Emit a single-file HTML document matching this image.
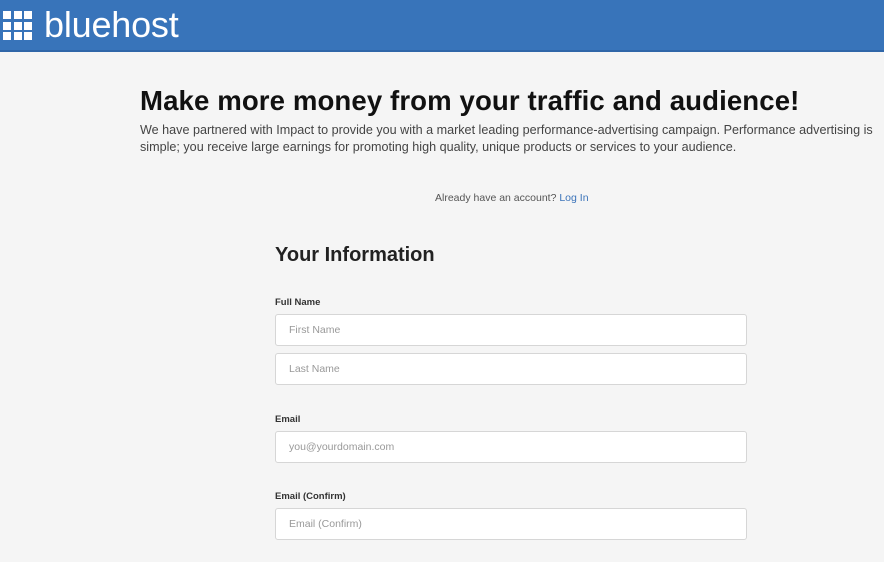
<!DOCTYPE html>
<html><head><meta charset="utf-8"><style>
*{margin:0;padding:0;box-sizing:border-box}
body{width:884px;height:562px;overflow:hidden;background:#f5f5f5;font-family:"Liberation Sans",sans-serif;position:relative}
.hdr{position:absolute;left:0;top:0;width:884px;height:52px;background:#3874ba;border-bottom:2px solid #2f66a8}
.grid{position:absolute;left:3px;top:11px;width:29px;height:29px;display:grid;grid-template-columns:repeat(3,8px);grid-gap:2.5px}
.grid i{background:#fff;display:block;width:8px;height:8px}
.logo{position:absolute;left:44px;top:4px;color:#fff;font-size:36px;font-family:"Liberation Sans",sans-serif;font-weight:normal;letter-spacing:-0.2px}
h1{position:absolute;left:140px;top:85px;font-size:27.6px;font-weight:bold;color:#111;white-space:nowrap;letter-spacing:0.1px}
.p{position:absolute;left:140px;top:122px;font-size:12.6px;color:#444;line-height:16.5px;width:744px}
.acc{position:absolute;left:435px;top:192px;font-size:10.5px;color:#555}
.acc span{color:#3b73b9}
h2{position:absolute;left:275px;top:244px;font-size:20px;font-weight:bold;color:#222;font-family:"Liberation Sans",sans-serif}
.lbl{position:absolute;left:275px;font-size:9.5px;font-weight:bold;color:#333}
.in{position:absolute;left:275px;width:472px;height:32px;background:#fff;border:1px solid #d6d6d6;border-radius:3px;font-size:10.5px;color:#999;padding-left:13px;line-height:30px}
</style></head><body>
<div class="hdr"><div class="grid"><i></i><i></i><i></i><i></i><i></i><i></i><i></i><i></i><i></i></div><div class="logo">bluehost</div></div>
<h1>Make more money from your traffic and audience!</h1>
<div class="p">We have partnered with Impact to provide you with a market leading performance-advertising campaign. Performance advertising is simple; you receive large earnings for promoting high quality, unique products or services to your audience.</div>
<div class="acc">Already have an account? <span>Log In</span></div>
<h2>Your Information</h2>
<div class="lbl" style="top:297px">Full Name</div>
<div class="in" style="top:314px">First Name</div>
<div class="in" style="top:353px">Last Name</div>
<div class="lbl" style="top:414px">Email</div>
<div class="in" style="top:431px">you@yourdomain.com</div>
<div class="lbl" style="top:491px">Email (Confirm)</div>
<div class="in" style="top:508px">Email (Confirm)</div>
</body></html>
